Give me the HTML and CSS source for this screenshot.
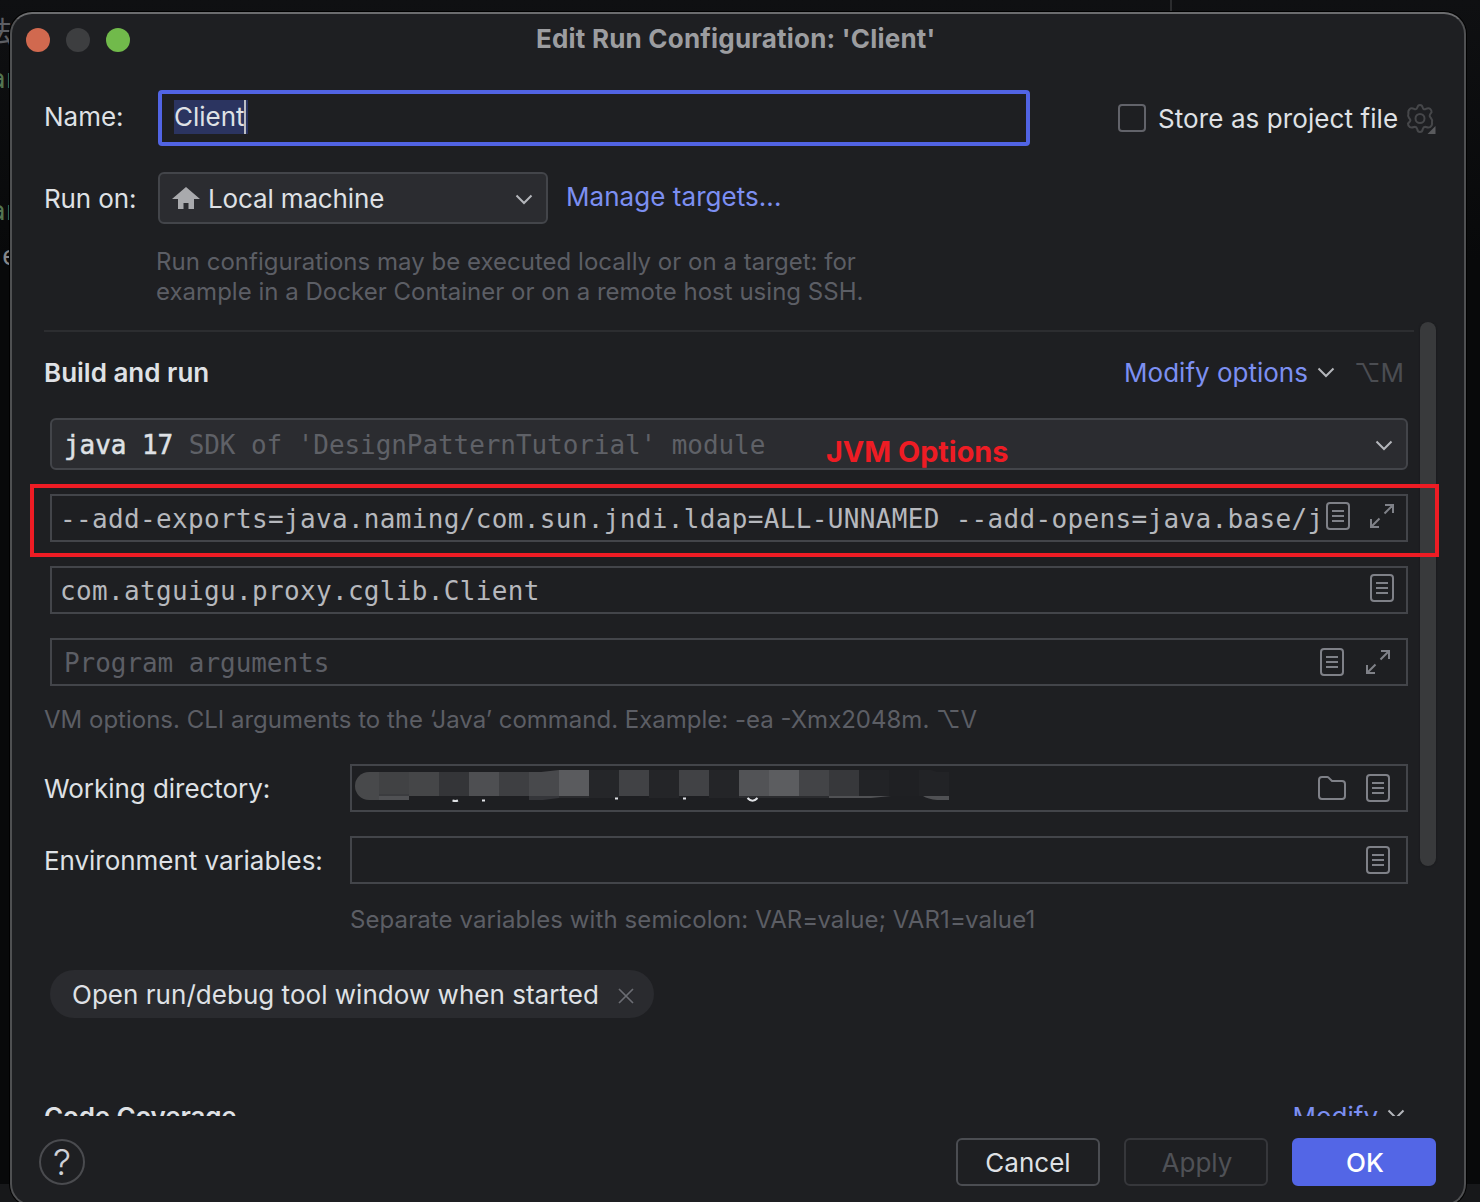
FILE: index.html
```html
<!DOCTYPE html>
<html lang="en">
<head>
<meta charset="utf-8">
<title>Edit Run Configuration: 'Client'</title>
<link rel="stylesheet" href="styles.css">
</head>
<body>
<svg class="defs" width="0" height="0" aria-hidden="true">
  <symbol id="doc" viewBox="0 0 24 28"><rect x="1" y="1" width="22" height="26" rx="3"/><path d="M6 9H18M6 14H18M6 19H18"/></symbol>
  <symbol id="expand" viewBox="0 0 24 24"><path d="M15 1H23V9M23 1L14.5 9.5M1 15V23H9M1 23L9.5 14.5"/></symbol>
  <symbol id="folder" viewBox="0 0 28 24"><path d="M1 4a3 3 0 0 1 3-3h5.2a2 2 0 0 1 1.4.6L14 5h10a3 3 0 0 1 3 3v12a3 3 0 0 1-3 3H4a3 3 0 0 1-3-3Z"/></symbol>
  <symbol id="chevron" viewBox="0 0 18 11"><path d="M1.5 1.5L9 9L16.5 1.5"/></symbol>
</svg>

<div class="editor">
  <span class="code c1">法</span>
  <span class="code c2">an</span>
  <span class="code c3">an</span>
  <span class="code c4">e</span>
  <span class="split"></span>
  <span class="status"></span>
</div>

<main class="window">
  <header class="titlebar">
    <div class="lights"><i class="close"></i><i class="min"></i><i class="max"></i></div>
    <h1 class="title">Edit Run Configuration: 'Client'</h1>
  </header>

  <section class="top">
    <div class="row name-row">
      <label class="label up">Name:</label>
      <div class="name-field"><span class="selected">Client</span></div>
      <span class="checkbox"></span>
      <span class="store">Store as project file</span>
      <svg class="gear" width="30" height="30" viewBox="0 0 30 30"><path d="M11.3 3.6Q11.9 1 14 1Q16.1 1 16.7 3.6Q17.2 5.7 19.3 5.2Q22.6 3.6 24 4.8Q25.9 6.6 25.6 8.2Q23.4 11 23.6 11.9Q24 13 24.9 14Q26.6 16 26 18.2Q26.6 21.500 24 23.200Q22.500 24 20 23Q17.500 22.400 16.800 25Q16.300 28 14 28Q11.700 28 11.200 25Q10.500 22.400 8 23Q5.500 24 4 23.200Q1.800 21.500 2 19.500Q4.600 17 4.400 16.100Q4 15 3.100 14Q1.400 12 2.400 9.800Q1.800 6.600 4 4.800Q5.400 3.600 8.700 5.200Q10.800 5.700 11.300 3.600Z"/><circle cx="14" cy="14.500" r="4.500"/><path class="tri" d="M29.500 22V30H21.500Z"/></svg>
    </div>
    <div class="row run-row">
      <label class="label down tight">Run on:</label>
      <div class="combo target">
        <svg class="home" width="28" height="22" viewBox="0 0 28 22"><path d="M14 0L28 12H22V22H16.500V16H11.500V22H6V12H0Z"/></svg>
        <span class="down tight">Local machine</span>
        <svg class="chev" width="18" height="11"><use href="#chevron"/></svg>
      </div>
      <a class="link manage">Manage targets...</a>
    </div>
    <p class="hint target-hint">Run configurations may be executed locally or on a target: for<br>example in a Docker Container or on a remote host using SSH.</p>
  </section>

  <section class="scroll">
    <div class="form">
      <div class="build-head">
        <h2>Build and run</h2>
        <a class="link">Modify options</a>
        <svg class="chev" width="18" height="11"><use href="#chevron"/></svg>
        <span class="shortcut">⌥M</span>
      </div>
      <div class="combo jdk mono">
        <span><b>java 17</b> <span class="muted">SDK of 'DesignPatternTutorial' module</span></span>
        <svg class="chev" width="18" height="11"><use href="#chevron"/></svg>
      </div>
      <div class="field mono vm">
        <span class="value">--add-exports=java.naming/com.sun.jndi.ldap=ALL-UNNAMED --add-opens=java.base/j</span>
        <svg class="icon" width="24" height="28"><use href="#doc"/></svg>
        <svg class="icon" width="24" height="24"><use href="#expand"/></svg>
      </div>
      <div class="field mono cls">
        <span class="value">com.atguigu.proxy.cglib.Client</span>
        <svg class="icon" width="24" height="28"><use href="#doc"/></svg>
      </div>
      <div class="field mono args">
        <span class="value">Program arguments</span>
        <svg class="icon" width="24" height="28"><use href="#doc"/></svg>
        <svg class="icon" width="24" height="24"><use href="#expand"/></svg>
      </div>
      <p class="hint vm-hint">VM options. CLI arguments to the ‘Java’ command. Example: -ea -Xmx2048m. ⌥V</p>
      <div class="pair">
        <label class="label">Working directory:</label>
        <div class="field side">
          <svg class="mosaic" width="610" height="34" viewBox="0 0 610 34">
            <g shape-rendering="crispEdges">
              <path fill="#414244" d="M26 4h30v22H26z"/><path fill="#505154" d="M26 28h30v4H26z"/><path fill="#3b3c3f" d="M26 26h30v2H26z"/>
              <path fill="#454648" d="M56 4h30v24H56z"/><path fill="#343538" d="M86 4h30v24H86z"/>
              <path fill="#4e4f52" d="M116 4h30v24h-30z"/><path fill="#3e3f42" d="M146 4h30v24h-30z"/>
              <path fill="#5a5b5e" d="M206 2h30v26h-30z"/>
              <path fill="#252629" d="M236 2h30v28h-30z"/><path fill="#414245" d="M266 2h30v26h-30z"/>
              <path fill="#242528" d="M296 2h30v28h-30z"/><path fill="#414245" d="M326 2h30v26h-30z"/>
              <path fill="#242528" d="M356 2h30v28h-30z"/><path fill="#525356" d="M386 2h30v26h-30z"/>
              <path fill="#5c5d60" d="M416 2h30v26h-30z"/><path fill="#434447" d="M446 2h30v26h-30z"/>
              <path fill="#37383b" d="M476 2h30v26h-30z"/><path fill="#222326" d="M506 2h30v26h-30z"/>
              <path fill="#1f2023" d="M536 2h30v26h-30z"/>
            </g>
            <path fill="#48494b" d="M26 4H16A14 14 0 0 0 16 32H26Z"/>
            <path fill="#48494c" d="M176 4h12l18-2V28H176Z"/>
            <path fill="#222326" d="M566 2h12l6 2h12v24h-30z"/>
            <path fill="#35363a" d="M176 28h30v2l-16 2h-14z"/><path fill="#2b2c2f" d="M206 28h30v2h-30zM386 28h90v2h-90z"/>
            <path fill="#505154" d="M476 28h62l-20 2h-42zM570 28h26v4h-12q-9-1-14-4z"/>
            <path class="rest" d="M99.500 32.500q3 1 5.500 0M129 32.500h3M262 30.500h3M330 30.500h3M394.500 30q5 5.500 10 0"/>
          </svg>
          <svg class="icon" width="28" height="24"><use href="#folder"/></svg>
          <svg class="icon" width="24" height="28"><use href="#doc"/></svg>
        </div>
      </div>
      <div class="pair env">
        <label class="label">Environment variables:</label>
        <div class="field side"><svg class="icon" width="24" height="28"><use href="#doc"/></svg></div>
      </div>
      <p class="hint env-hint">Separate variables with semicolon: VAR=value; VAR1=value1</p>
      <div class="chip"><span>Open run/debug tool window when started</span><svg width="16" height="16" viewBox="0 0 16 16"><path d="M1 1L15 15M15 1L1 15"/></svg></div>
      <div class="coverage">
        <h2>Code Coverage</h2>
        <a class="link">Modify</a>
        <svg class="chev" width="18" height="11"><use href="#chevron"/></svg>
      </div>
    </div>
    <div class="scrollbar"></div>
  </section>

  <footer class="footer">
    <span class="help">?</span>
    <button class="btn">Cancel</button>
    <button class="btn disabled">Apply</button>
    <button class="btn primary">OK</button>
  </footer>
</main>

<div class="mark-box"></div>
<div class="mark-text">JVM Options</div>
</body>
</html>
```

FILE: styles.css
```css
* { box-sizing: border-box; }
html, body { margin: 0; }
body {
  position: relative;
  width: 1480px;
  height: 1202px;
  overflow: hidden;
  background: linear-gradient(#0f1012, #08090a 260px, #08090a);
  font: 26px/32px Inter, "Liberation Sans", sans-serif;
  color: #dfe1e5;
  white-space: nowrap;
}
h1, h2, p { margin: 0; font-size: inherit; }
svg { display: block; flex: none; }
.defs { position: absolute; }

/* editor that shows behind the dialog */
.editor { position: absolute; inset: 0; overflow: hidden; }
.code { position: absolute; font-family: "DejaVu Sans Mono", "Noto Sans CJK SC", monospace; }
.c1 { left: -16px; top: 17px; font-size: 29px; color: #5d5f64; }
.c2, .c3 { left: -10px; color: #547550; }
.c2 { top: 63px; }
.c3 { top: 195px; }
.c4 { left: 2px; top: 240px; color: #85878b; }
.split { position: absolute; left: 1170px; top: 0; width: 2px; height: 12px; background: #2b2c2e; }
.status { position: absolute; left: 0; right: 0; top: 1184px; height: 18px; background: #17181a; }

.window {
  position: relative;
  display: flex;
  flex-direction: column;
  width: 1456px;
  height: 1194px;
  margin: 12px 0 0 10px;
  background: #1e1f22;
  border: 2px solid #4f5052;
  border-top-color: #6b6c6e;
  border-radius: 22px;
  box-shadow: 0 0 0 1px #000;
}

.titlebar { position: relative; height: 52px; flex: none; }
.lights { display: flex; gap: 16px; padding: 14px; }
.lights i { width: 24px; height: 24px; border-radius: 50%; }
.close { background: #d1694f; }
.min { background: #3d3e40; }
.max { background: #71ba4b; }
.title { position: absolute; left: 524px; top: 9px; color: #9c9da0; font-weight: 700; letter-spacing: .2px; }

.top { flex: none; height: 256px; padding: 24px 0 0 32px; }
.row { display: flex; align-items: center; }
.label { flex: none; }
.up { padding-bottom: 3px; }
.down { padding-top: 2px; }
.tight { letter-spacing: -.14px; }
.name-row { height: 56px; }
.name-row .label, .run-row .label { width: 114px; }
.name-field {
  width: 872px; height: 56px; padding: 6px 12px;
  border: 4px solid #5164e4; border-radius: 4px;
}
.selected { display: block; width: 74px; height: 34px; line-height: 33px; background: linear-gradient(90deg, transparent 70px, #bcbec4 70px, #bcbec4 72px, transparent 72px) #2b3460; }
.checkbox { width: 28px; height: 28px; margin-left: 88px; border: 2px solid #62636a; border-radius: 4px; }
.store { margin-left: 12px; width: 248px; padding-top: 2px; letter-spacing: .09px; }
.gear { margin-top: 1px; fill: none; stroke: #46474a; stroke-width: 2; }
.gear .tri { fill: #5a5b5e; stroke: none; }
.run-row { margin-top: 26px; height: 52px; }
.combo {
  display: flex; align-items: center; justify-content: space-between; height: 52px;
  border: 2px solid #43454a; border-radius: 6px; background: #2b2c30;
}
.target { width: 390px; padding: 0 13px 0 12px; justify-content: flex-start; }
.target .home { margin: 0 8px 1px 0; fill: #a9aaad; }
.target .chev { margin: 3px 0 0 auto; }
.chev { fill: none; stroke: #b4b6bb; stroke-width: 2; }
.link { color: #7c8ff2; }
.manage { margin: -3px 0 0 18px; letter-spacing: .05px; }
.hint { font-size: 24px; line-height: 30px; color: #5c5e65; }
.target-hint { margin: 23px 0 0 112px; letter-spacing: .02px; }

.scroll { display: flex; flex: none; height: 794px; overflow: hidden; padding-left: 32px; }
.form { width: 1370px; margin-top: 8px; border-top: 2px solid #2c2d30; }
.scrollbar { width: 16px; height: 544px; margin-left: 6px; border-radius: 8px; background: #393a3c; box-shadow: 0 0 2px #151618; }
.build-head { display: flex; align-items: center; height: 82px; padding-right: 10px; }
.build-head h2 { margin-right: auto; font-weight: 600; }
.build-head .chev { margin: -2px 19px 0 9px; }
.shortcut { color: #4b4d52; }
.jdk { margin: 4px 6px 0 6px; padding: 2px 13px 0 12px; letter-spacing: -.07px; }
.jdk .chev { margin-top: 1px; }
.jdk b { font-weight: 400; -webkit-text-stroke: .5px; }
.muted { color: #5f6167; }
.mono { font-family: "DejaVu Sans Mono", monospace; }
.field { display: flex; align-items: center; justify-content: flex-end; height: 48px; border: 2px solid #43454a; }
.icon { fill: none; stroke: #7f8188; stroke-width: 2; }
.vm, .cls, .args { margin: 24px 6px 0 6px; color: #b6b8bd; }
.value { overflow: hidden; padding-top: 2px; }
.vm { padding: 0 12px 0 8px; justify-content: flex-start; }
.vm, .cls { letter-spacing: .34px; }
.vm .value { width: 1258px; margin-right: 8px; }
.vm .icon { margin: 0 20px 4px 0; }
.vm .icon + .icon { margin: 0 0 4px; }
.cls { padding: 0 12px 0 8px; justify-content: space-between; }
.cls .icon { margin-bottom: 4px; }
.args { padding: 0 16px 0 12px; letter-spacing: -.05px; }
.args .value { margin-right: auto; color: #5c5e65; }
.args .icon + .icon { margin-left: 22px; }
.vm-hint { margin-top: 19px; }
.pair { display: flex; align-items: center; height: 48px; margin: 29px 6px 0 0; }
.pair .label { width: 306px; padding-top: 2px; letter-spacing: -.04px; }
.side { flex: 1; padding-right: 16px; }
.mosaic { align-self: flex-start; margin: 2px auto 0 1px; }
.rest { fill: none; stroke: #dfe1e5; stroke-width: 2; }
.side .icon + .icon { margin-left: 20px; }
.env { margin-top: 24px; }
.env-hint { margin: 21px 0 0 306px; letter-spacing: .09px; }
.chip { display: flex; align-items: center; width: 604px; height: 48px; margin: 35px 0 0 6px; padding: 2px 0 0 22px; border-radius: 24px; background: #2a2b2f; letter-spacing: .03px; }
.chip svg { margin: 2px 20px 0 auto; fill: none; stroke: #6b6d73; stroke-width: 1.7; }
.coverage { display: flex; align-items: center; margin: 83px 10px 0 0; height: 32px; }
.coverage h2 { margin-right: auto; font-weight: 600; letter-spacing: -.15px; }
.coverage .chev { margin: -5px -1px 0 9px; }

.footer { display: flex; align-items: center; height: 48px; margin-top: 22px; padding: 0 28px 0 27px; }
.help { display: grid; place-items: center; width: 46px; height: 46px; margin-right: auto; border: 2px solid #4a4b4f; border-radius: 50%; font: 300 36px/42px Inter, "Open Sans", sans-serif; color: #ced0d6; }
.btn {
  width: 144px; height: 48px; margin-left: 24px; padding: 2px 0 0;
  border: 2px solid #4b4d52; border-radius: 6px; background: none;
  color: #dfe1e5; font: inherit;
}
.disabled { border-color: #36373b; color: #4f5156; padding-left: 2px; }
.primary { border-color: #5366e6; background: #5366e6; color: #fff; font-weight: 500; padding-left: 2px; }

/* screenshot annotation */
.mark-box { position: absolute; left: 30px; top: 484px; width: 1409px; height: 73px; border: 4px solid #ee1c24; }
.mark-text { position: absolute; left: 826px; top: 436px; color: #ee1c24; font-size: 28.8px; font-weight: 700; }
```
